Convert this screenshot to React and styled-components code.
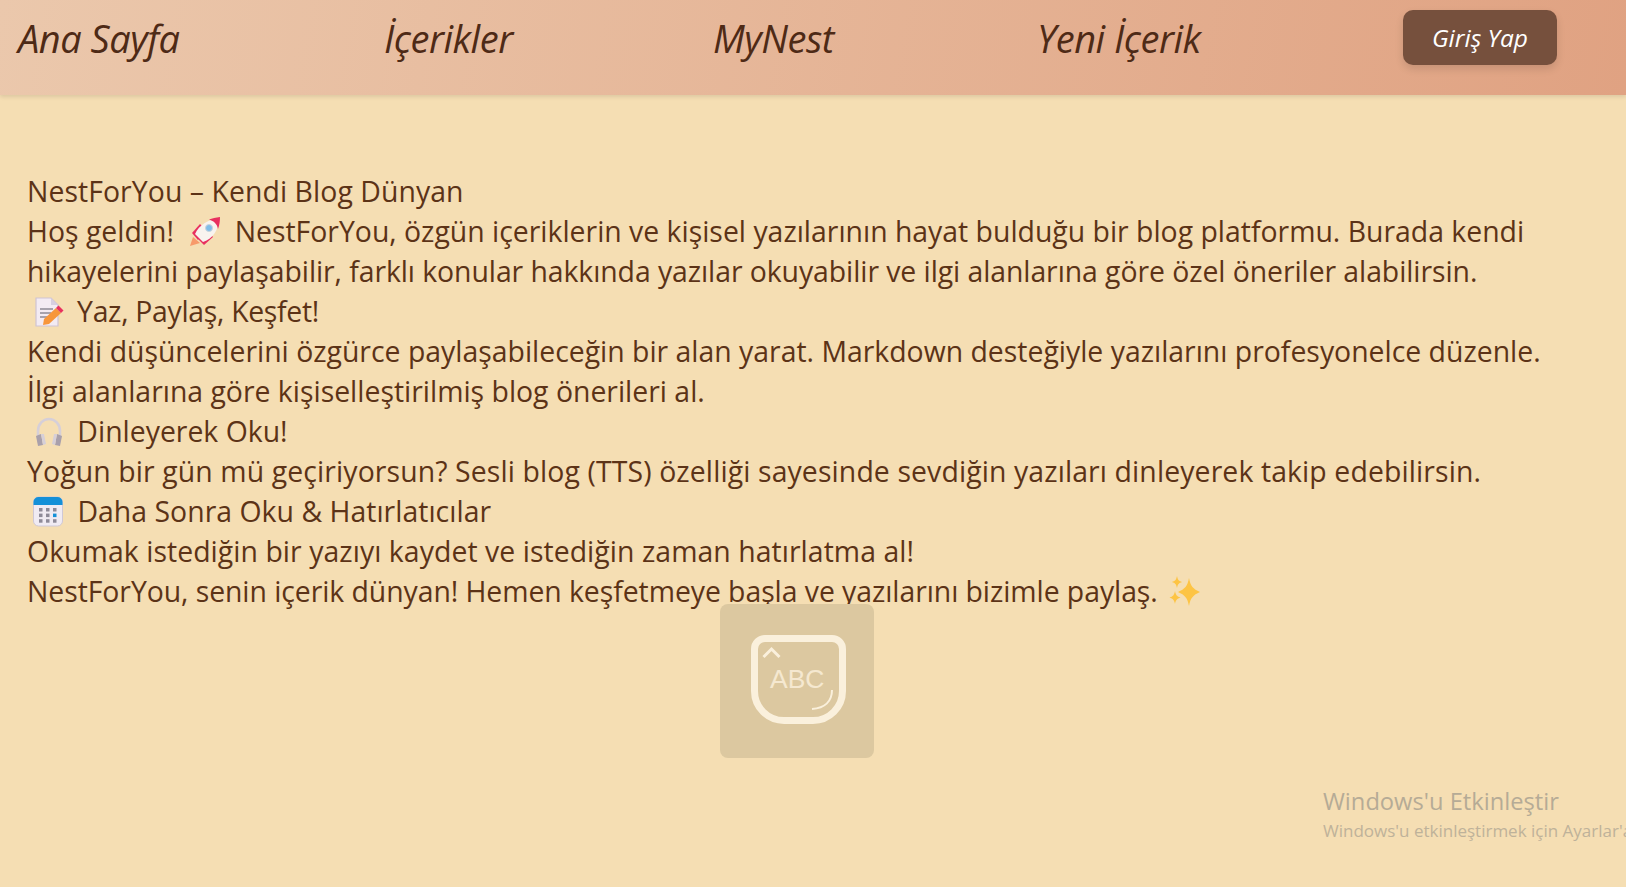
import React from "react";
import styled, { createGlobalStyle } from "styled-components";

const GlobalStyle = createGlobalStyle`
  html, body {
    margin: 0;
    padding: 0;
    min-height: 100%;
    background: #f5deb3;
    overflow: hidden;
  }
  body {
    font-family: "Open Sans", "Noto Sans", sans-serif;
  }
`;

const Rocket = () => (
  <svg width="32" height="32" viewBox="-2 0 32 32">
    <path d="M0 30 L3 21 L10 27 Z" fill="#f79a6b" />
    <path d="M2 17 L10 8 L16 14 L8 24 Z" fill="#e8305f" />
    <path d="M14 29 L23 21 L18 15 L7 22 Z" fill="#e8305f" />
    <path d="M5 18 L13 26 C23 23 29 13 29 2 C19 3 9 9 5 18 Z" fill="#f8f3ef" />
    <path d="M19 3.500 C22 2.500 26 1.500 30 1 C30 5 29.500 9 28 13 C27 8 24 5 19 3.500 Z" fill="#e8305f" />
    <circle cx="19" cy="12" r="3.500" fill="#7fbde8" stroke="#c9d4dc" />
  </svg>
);

const Memo = () => (
  <svg width="32" height="32" viewBox="0 0 32 32">
    <path d="M3 2 H18 L25 9 V30 H3 Z" fill="#f3ebf3" stroke="#cfc3d3" strokeWidth="1.2" />
    <path d="M18 2 V9 H25 Z" fill="#d8cfe0" />
    <path d="M7 13 H20 M7 17 H18 M7 21 H14" stroke="#8f8a96" strokeWidth="1.4" />
    <path d="M10 29 L11 23 L23 12 L28 17 L16 28 Z" fill="#f7963b" />
    <path d="M23 12 L25.500 9.500 L30.500 14.500 L28 17 Z" fill="#e8305f" />
  </svg>
);

const Headphones = () => (
  <svg width="32" height="32" viewBox="0 0 32 32">
    <path d="M5 20 V15 C5 8 10 3 16 3 C22 3 27 8 27 15 V20" fill="none" stroke="#d6cfd8" strokeWidth="2.6" />
    <path d="M3 20 L8 18 L10 29 L5 30 Z" fill="#a9a0ab" />
    <path d="M8 18 L11 18 L13 28 L10 29 Z" fill="#d6cfd8" />
    <path d="M29 20 L24 18 L22 29 L27 30 Z" fill="#a9a0ab" />
    <path d="M24 18 L21 18 L19 28 L22 29 Z" fill="#d6cfd8" />
  </svg>
);

const Calendar = () => (
  <svg width="32" height="32" viewBox="1 1 32 32">
    <rect x="1.500" y="2" width="29" height="29" rx="5" fill="#f0ebf3" stroke="#cfc8d6" />
    <path d="M1.500 10 V7 A5 5 0 0 1 6.500 2 H25.500 A5 5 0 0 1 30.500 7 V10 Z" fill="#1490d8" />
    {[0, 1, 2].map((r) =>
      [0, 1, 2].map((c) => (
        <rect
          key={`${r}-${c}`}
          x={7 + c * 7}
          y={13 + r * 5.6}
          width="3.500"
          height="3.500"
          fill={r === 1 && c === 2 ? "#1490d8" : "#8e8a98"}
        />
      ))
    )}
  </svg>
);

const Sparkles = () => (
  <svg width="32" height="32" viewBox="0 0 32 32">
    <g fill="#fdc444">
      <path d="M20 2 C21.500 10 24 13 31 16 C24 19 21.500 22 20 30 C18.500 22 16 19 9 16 C16 13 18.500 10 20 2 Z" />
      <path d="M8 0 C8.800 4 10 5 13 6 C10 7 8.800 8 8 12 C7.200 8 6 7 3 6 C6 5 7.200 4 8 0 Z" />
      <path d="M6 15 C6.800 19 8 20.500 11.500 21.500 C8 22.500 6.800 24 6 28 C5.200 24 4 22.500 0.500 21.500 C4 20.500 5.200 19 6 15 Z" />
    </g>
  </svg>
);

const App = () => {
  return (
    <Page>
      <GlobalStyle />
      <Navbar>
        <NavLink $width={366}>Ana Sayfa</NavLink>
        <NavLink $width={329}>İçerikler</NavLink>
        <NavLink $width={324}>MyNest</NavLink>
        <NavLink $width={366}>Yeni İçerik</NavLink>
        <LoginButton>Giriş Yap</LoginButton>
      </Navbar>
      <Content>
        <Line $spacing={0.07}>NestForYou – Kendi Blog Dünyan</Line>
        <Line>
          Hoş geldin! <Emoji $width={46}><Rocket /></Emoji> NestForYou, özgün içeriklerin ve kişisel yazılarının hayat
          bulduğu bir blog platformu. Burada kendi
        </Line>
        <Line $spacing={-0.07}>
          hikayelerini paylaşabilir, farklı konular hakkında yazılar okuyabilir ve ilgi alanlarına göre özel öneriler
          alabilirsin.
        </Line>
        <Line $spacing={-0.3}>
          <Emoji $width={43}><Memo /></Emoji> Yaz, Paylaş, Keşfet!
        </Line>
        <Line>
          Kendi düşüncelerini özgürce paylaşabileceğin bir alan yarat. Markdown desteğiyle yazılarını
          profesyonelce düzenle.
        </Line>
        <Line>İlgi alanlarına göre kişiselleştirilmiş blog önerileri al.</Line>
        <Line>
          <Emoji $width={43}><Headphones /></Emoji> Dinleyerek Oku!
        </Line>
        <Line $spacing={0.115}>
          Yoğun bir gün mü geçiriyorsun? Sesli blog (TTS) özelliği sayesinde sevdiğin yazıları dinleyerek takip edebilirsin.
        </Line>
        <Line $spacing={0.03}>
          <Emoji $width={43}><Calendar /></Emoji> Daha Sonra Oku &amp; Hatırlatıcılar
        </Line>
        <Line $spacing={0.06}>Okumak istediğin bir yazıyı kaydet ve istediğin zaman hatırlatma al!</Line>
        <Line $spacing={-0.06}>
          NestForYou, senin içerik dünyan! Hemen keşfetmeye başla ve yazılarını bizimle paylaş.{" "}
          <Emoji $width={40}><Sparkles /></Emoji>
        </Line>
      </Content>
      <KeyboardHint>
        <svg width="95" height="89" viewBox="0 0 95 89">
          <path
            d="M14 3.500 H81 A10.500 10.500 0 0 1 91.500 14 V56 A29.500 29.500 0 0 1 62 85.500 H33 A29.500 29.500 0 0 1 3.500 56 V14 A10.500 10.500 0 0 1 14 3.500 Z"
            fill="none"
            stroke="#faf0dc"
            strokeWidth="7"
          />
          <path d="M12.500 22 L20.500 14 L28.500 22" fill="none" stroke="#faf0dc" strokeWidth="3" />
          <path d="M81 55 C81 66 74 73 61 74" fill="none" stroke="#faf0dc" strokeWidth="2" />
        </svg>
        <KeyboardLabel>ABC</KeyboardLabel>
      </KeyboardHint>
      <Watermark>
        <WatermarkTitle>Windows'u Etkinleştir</WatermarkTitle>
        <WatermarkText>Windows'u etkinleştirmek için Ayarlar'a gidin.</WatermarkText>
      </Watermark>
    </Page>
  );
};

const Page = styled.div`
  position: relative;
  width: 100%;
  height: 887px;
  overflow: hidden;
  background: #f5deb3;
  color: #5c3317;
`;

const Navbar = styled.nav`
  display: flex;
  align-items: flex-start;
  height: 95px;
  padding: 11px 18px 0;
  box-sizing: border-box;
  background: linear-gradient(100deg, #ebc8ac 0%, #e0a282 100%);
  box-shadow: 0 2px 4px rgba(0, 0, 0, 0.1);
`;

const NavLink = styled.a`
  flex: 0 0 ${(p) => p.$width}px;
  font-size: 38px;
  line-height: 55px;
  font-style: italic;
  font-weight: 400;
  font-stretch: 88%;
  letter-spacing: -0.5px;
  color: #4e2a16;
`;

const LoginButton = styled.button`
  width: 154px;
  height: 55px;
  margin-top: -1px;
  border: none;
  border-radius: 10px;
  background: #76503d;
  color: #fff;
  font-family: inherit;
  font-size: 24.500px;
  font-style: italic;
  font-stretch: 90%;
  box-shadow: 0 4px 8px rgba(0, 0, 0, 0.12);
`;

const Content = styled.main`
  padding: 76px 30px 0 27px;
  font-size: 28.4px;
  line-height: 40px;
  color: #5c3317;
`;

const Line = styled.div`
  letter-spacing: ${(p) => p.$spacing || 0}px;
`;

const Emoji = styled.span`
  display: inline-block;
  vertical-align: -6px;
  width: ${(p) => p.$width}px;
  height: 32px;
  text-align: center;
`;

const KeyboardHint = styled.div`
  position: absolute;
  left: 720px;
  top: 604px;
  width: 154px;
  height: 154px;
  padding: 0 0 3px 3px;
  box-sizing: border-box;
  display: flex;
  align-items: center;
  justify-content: center;
  border-radius: 8px;
  background: #dcc8a0;
`;

const KeyboardLabel = styled.span`
  position: absolute;
  left: 50px;
  top: 60px;
  font-family: "Liberation Sans", sans-serif;
  font-size: 26.500px;
  color: #f5e8d0;
`;

const Watermark = styled.div`
  position: absolute;
  left: 1323px;
  top: 786px;
  width: 340px;
  color: #b5ab96;
  white-space: nowrap;
`;

const WatermarkTitle = styled.div`
  font-size: 23.700px;
  line-height: 30px;
`;

const WatermarkText = styled.div`
  font-size: 17px;
  line-height: 29px;
  opacity: 0.85;
`;

export default App;
